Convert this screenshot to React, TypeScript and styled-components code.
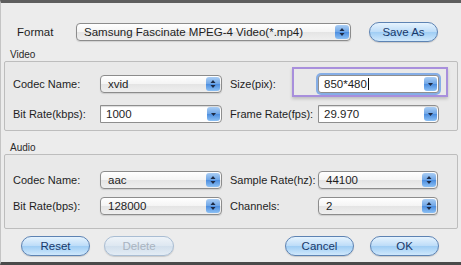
import React from "react";
import styled, { createGlobalStyle } from "styled-components";

const GlobalStyle = createGlobalStyle`
  html, body {
    margin: 0;
    padding: 0;
    background: #ececec;
  }
  body {
    font-family: "Liberation Sans", Arial, sans-serif;
    font-size: 11px;
    color: #1e1e1e;
  }
`;

const Window = styled.div`
  box-sizing: border-box;
  width: 461px;
  height: 265px;
  display: flex;
  flex-direction: column;
  background: #ececec;
  border-top: 3px solid #5e5e5e;
  border-bottom: 3px solid #4a4a4a;
  border-left: 1px solid #c4c4c4;
  overflow: hidden;
`;

const TopRow = styled.div`
  display: flex;
  align-items: center;
  padding: 19px 0 0 16px;
`;

const FormatLabel = styled.span`
  width: 59px;
  font-size: 11.5px;
`;

const SectionLabel = styled.div<{ $gap: number }>`
  margin-top: ${(p) => p.$gap}px;
  padding-left: 9px;
  height: 12px;
  line-height: 12px;
  font-size: 10px;
  color: #2a2a2a;
`;

const Group = styled.div<{ $top: number; $gap: number; $bottom: number }>`
  margin: 0 3px 0 3px;
  border: 1px solid #bdbdbd;
  border-radius: 2px;
  background: #e9e9e9;
  padding: ${(p) => p.$top}px 0 ${(p) => p.$bottom}px 8px;
  display: grid;
  grid-template-columns: 87px 130px 88px 120px;
  row-gap: ${(p) => p.$gap}px;
  align-items: center;
`;

const FieldLabel = styled.span`
  font-size: 11px;
  white-space: nowrap;
`;

const PopUp = styled.div<{ $w: number }>`
  box-sizing: border-box;
  position: relative;
  width: ${(p) => p.$w}px;
  height: 18px;
  border: 1px solid #8c8c8c;
  border-radius: 4px;
  background: linear-gradient(#ffffff, #f4f4f4 50%, #e4e4e4 51%, #efefef);
  box-shadow: 0 1px 1px rgba(0, 0, 0, 0.12);
  display: flex;
  align-items: center;
  padding-left: 7px;
  font-size: 11.5px;
`;

const Stepper = styled.svg`
  position: absolute;
  right: 1px;
  top: 1px;
`;

const Combo = styled.div<{ $w: number; $focus?: boolean }>`
  box-sizing: border-box;
  position: relative;
  width: ${(p) => p.$w}px;
  height: 18px;
  border: 1px solid #8e8e8e;
  background: #ffffff;
  box-shadow: ${(p) =>
    p.$focus ? "0 0 0 2px #86aee6" : "inset 0 1px 1px rgba(0,0,0,0.15)"};
  border-radius: ${(p) => (p.$focus ? "3px" : "0 4px 4px 0")};
  display: flex;
  align-items: center;
  padding-left: 5px;
  font-size: 11.5px;
`;

const Caret = styled.span`
  display: inline-block;
  width: 1px;
  height: 12px;
  background: #111;
  margin-left: 1px;
`;

const Highlight = styled.div`
  position: absolute;
  left: -27px;
  top: -9px;
  right: -10px;
  bottom: -5px;
  border: 2px solid #a88fdc;
  box-shadow: 0 2px 3px rgba(0, 0, 0, 0.18);
  pointer-events: none;
`;

const ButtonRow = styled.div`
  display: flex;
  align-items: center;
  padding: 7px 0 0 20px;
`;

const Spacer = styled.div`
  flex: 1;
`;

const Aqua = styled.button<{ $w: number; $off?: boolean; $gap?: number }>`
  box-sizing: border-box;
  width: ${(p) => p.$w}px;
  height: 20px;
  margin-left: ${(p) => p.$gap || 0}px;
  border-radius: 10px;
  border: 1px solid ${(p) => (p.$off ? "#a9bdd3" : "#5d83b3")};
  background: ${(p) =>
    p.$off
      ? "linear-gradient(#eef3f8, #dde7f1 50%, #d2dfec 51%, #e3ecf5)"
      : "linear-gradient(#e6f3fe, #bcdcf8 50%, #9fcdf4 51%, #cfe8fc)"};
  color: ${(p) => (p.$off ? "#a8b3c0" : "#17386a")};
  font-family: "Liberation Sans", Arial, sans-serif;
  font-size: 11.5px;
  padding: 0;
  box-shadow: 0 1px 1px rgba(0, 0, 0, 0.15);
`;

const StepIcon = () => (
  <Stepper width="14" height="14" viewBox="0 0 14 14">
    <defs>
      <linearGradient id="sg" x1="0" y1="0" x2="0" y2="1">
        <stop offset="0" stopColor="#a9cdf4" />
        <stop offset="0.5" stopColor="#6ea5e6" />
        <stop offset="0.51" stopColor="#4b8ddf" />
        <stop offset="1" stopColor="#8cc0f4" />
      </linearGradient>
    </defs>
    <rect x="0" y="0" width="14" height="14" rx="3" fill="url(#sg)" />
    <path d="M4.5 6 L7 3 L9.5 6 Z" fill="#1d2a44" />
    <path d="M4.5 8 L7 11 L9.5 8 Z" fill="#1d2a44" />
  </Stepper>
);

const DropIcon = () => (
  <Stepper width="13" height="14" viewBox="0 0 13 14">
    <defs>
      <linearGradient id="dg" x1="0" y1="0" x2="0" y2="1">
        <stop offset="0" stopColor="#a9cdf4" />
        <stop offset="0.5" stopColor="#6ea5e6" />
        <stop offset="0.51" stopColor="#4b8ddf" />
        <stop offset="1" stopColor="#8cc0f4" />
      </linearGradient>
    </defs>
    <rect x="0" y="0" width="13" height="14" rx="3" fill="url(#dg)" />
    <path d="M4 6 L6.5 9 L9 6 Z" fill="#1d2a44" />
  </Stepper>
);

const Select = ({ w, value }: { w: number; value: string }) => (
  <PopUp $w={w}>
    {value}
    <StepIcon />
  </PopUp>
);

const App: React.FC = () => {
  return (
    <>
      <GlobalStyle />
      <Window>
        <TopRow>
          <FormatLabel>Format</FormatLabel>
          <Select w={275} value="Samsung Fascinate MPEG-4 Video(*.mp4)" />
          <Aqua $w={69} $gap={18}>
            Save As
          </Aqua>
        </TopRow>

        <SectionLabel $gap={7}>Video</SectionLabel>
        <Group $top={13} $gap={12} $bottom={7}>
          <FieldLabel>Codec Name:</FieldLabel>
          <Select w={122} value="xvid" />
          <FieldLabel>Size(pix):</FieldLabel>
          <Combo $w={121} $focus>
            850*480
            <Caret />
            <DropIcon />
            <Highlight />
          </Combo>

          <FieldLabel>Bit Rate(kbps):</FieldLabel>
          <Combo $w={122}>
            1000
            <DropIcon />
          </Combo>
          <FieldLabel>Frame Rate(fps):</FieldLabel>
          <Combo $w={121}>
            29.970
            <DropIcon />
          </Combo>
        </Group>

        <SectionLabel $gap={11}>Audio</SectionLabel>
        <Group $top={16} $gap={8} $bottom={13}>
          <FieldLabel>Codec Name:</FieldLabel>
          <Select w={122} value="aac" />
          <FieldLabel>Sample Rate(hz):</FieldLabel>
          <Select w={120} value="44100" />

          <FieldLabel>Bit Rate(bps):</FieldLabel>
          <Select w={122} value="128000" />
          <FieldLabel>Channels:</FieldLabel>
          <Select w={120} value="2" />
        </Group>

        <ButtonRow>
          <Aqua $w={69}>Reset</Aqua>
          <Aqua $w={70} $off $gap={14}>
            Delete
          </Aqua>
          <Spacer />
          <Aqua $w={69}>Cancel</Aqua>
          <Aqua $w={69} $gap={16}>
            OK
          </Aqua>
          <div style={{ width: 22 }} />
        </ButtonRow>
      </Window>
    </>
  );
};

export default App;
